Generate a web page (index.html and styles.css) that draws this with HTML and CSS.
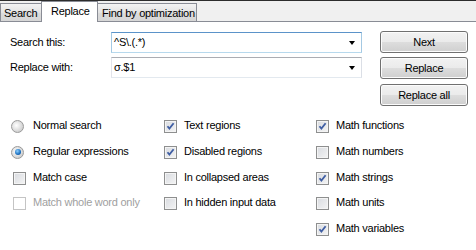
FILE: index.html
```html
<!DOCTYPE html>
<html>
<head>
  <meta charset="utf-8">
  <title>Find and replace</title>
  <link rel="stylesheet" href="styles.css">
</head>
<body>

  <ul class="tab-bar">
    <li class="tab tab-search">Search</li>
    <li class="tab tab-replace active">Replace</li>
    <li class="tab tab-find">Find by optimization</li>
  </ul>

  <section class="panel">
    <div class="top-row">
      <div class="fields">
        <div class="field-row">
          <label class="field-label">Search this:</label>
          <div class="combo focused">
            <span class="combo-text">^S\.(.*)</span>
            <span class="combo-arrow"></span>
          </div>
        </div>
        <div class="field-row">
          <label class="field-label">Replace with:</label>
          <div class="combo">
            <span class="combo-text">σ.$1</span>
            <span class="combo-arrow"></span>
          </div>
        </div>
      </div>
      <div class="buttons">
        <button class="btn">Next</button>
        <button class="btn">Replace</button>
        <button class="btn btn-last">Replace all</button>
      </div>
    </div>

    <div class="options">
      <!-- column 1 -->
      <div class="option col1 row1"><span class="radio"></span><span class="option-text">Normal search</span></div>
      <div class="option col1 row2"><span class="radio checked"></span><span class="option-text">Regular expressions</span></div>
      <div class="option col1 row3"><span class="check"></span><span class="option-text">Match case</span></div>
      <div class="option col1 row4 disabled"><span class="check"></span><span class="option-text">Match whole word only</span></div>

      <!-- column 2 -->
      <div class="option col2 row1"><span class="check checked"><svg viewBox="0 0 11 11" width="11" height="11"><path d="M2.5 5.2 L4.4 7.6 L8.6 2.2" fill="none" stroke="#3f5ea3" stroke-width="1.8"/></svg></span><span class="option-text">Text regions</span></div>
      <div class="option col2 row2"><span class="check checked"><svg viewBox="0 0 11 11" width="11" height="11"><path d="M2.5 5.2 L4.4 7.6 L8.6 2.2" fill="none" stroke="#3f5ea3" stroke-width="1.8"/></svg></span><span class="option-text">Disabled regions</span></div>
      <div class="option col2 row3"><span class="check"></span><span class="option-text">In collapsed areas</span></div>
      <div class="option col2 row4"><span class="check"></span><span class="option-text">In hidden input data</span></div>

      <!-- column 3 -->
      <div class="option col3 row1"><span class="check checked"><svg viewBox="0 0 11 11" width="11" height="11"><path d="M2.5 5.2 L4.4 7.6 L8.6 2.2" fill="none" stroke="#3f5ea3" stroke-width="1.8"/></svg></span><span class="option-text">Math functions</span></div>
      <div class="option col3 row2"><span class="check"></span><span class="option-text">Math numbers</span></div>
      <div class="option col3 row3"><span class="check checked"><svg viewBox="0 0 11 11" width="11" height="11"><path d="M2.5 5.2 L4.4 7.6 L8.6 2.2" fill="none" stroke="#3f5ea3" stroke-width="1.8"/></svg></span><span class="option-text">Math strings</span></div>
      <div class="option col3 row4"><span class="check"></span><span class="option-text">Math units</span></div>
      <div class="option col3 row5"><span class="check checked"><svg viewBox="0 0 11 11" width="11" height="11"><path d="M2.5 5.2 L4.4 7.6 L8.6 2.2" fill="none" stroke="#3f5ea3" stroke-width="1.8"/></svg></span><span class="option-text">Math variables</span></div>
    </div>
  </section>

</body>
</html>
```

FILE: styles.css
```css
html {
  font-family: "Liberation Sans", Arial, sans-serif;
  font-size: 11px;
  letter-spacing: -0.25px; /* closer to the narrow system dialog font */
}

* {
  box-sizing: border-box;
}

body {
  margin: 0;
  background: #ffffff;
  color: #000000;
}

/* tab strip across the top */
.tab-bar {
  list-style-type: none;
  margin: 0;
  padding: 0;
  height: 22px; /* 1px dark line + 20px strip + 1px bottom line */
  display: flex;
  align-items: flex-end;
  background: #f0f0f0;
  border-top: 1px solid #2c2c2c;
  border-bottom: 1px solid #898c95;
}

.tab {
  height: 18px;
  padding: 3px 0 0 3px;
  border: 1px solid #898c95;
  border-bottom: none;
  background: linear-gradient(#f3f3f3, #e3e3e3 50%, #dbdbdb 51%, #d6d6d6);
  line-height: 13px;
  white-space: nowrap;
  flex: none;
}

.tab-search {
  width: 42px;
}

.tab-find {
  width: 100px;
  padding-left: 4px;
}

.tab.active {
  height: 21px;
  width: 57px;
  margin: 0 -1px -1px -1px; /* overlap neighbours and cover the strip line */
  padding: 3px 0 0 9px;
  background: #ffffff;
  position: relative;
}

/* panel content */
.panel {
  padding: 9px 0 0 10px;
}

.top-row {
  display: flex;
}

.fields {
  padding-top: 1px;
  display: flex;
  flex-direction: column;
  gap: 4px;
}

.field-row {
  display: flex;
  align-items: center;
}

.field-label {
  width: 101px;
  line-height: 13px;
}

.combo {
  width: 251px;
  height: 21px;
  display: flex;
  align-items: center;
  padding: 0 6px 0 2px;
  border: 1px solid;
  border-color: #abadb3 #dbdfe6 #e3e9ef #e2e3ea;
  background: #ffffff;
}

.combo.focused {
  border-color: #5b93c9 #a4c9e3 #b7d9ed #a4c9e3;
}

.combo-text {
  flex: 1;
  line-height: 13px;
}

.combo-arrow {
  width: 0;
  height: 0;
  border-left: 3.5px solid transparent;
  border-right: 3.5px solid transparent;
  border-top: 4px solid #000000;
}

.buttons {
  margin-left: 18px;
  display: flex;
  flex-direction: column;
  gap: 4px;
}

.btn {
  width: 88px;
  height: 22px;
  padding: 0;
  font-family: inherit;
  font-size: 11px;
  letter-spacing: inherit;
  color: #000000;
  border: 1px solid #707070;
  border-radius: 3px;
  background: linear-gradient(#f2f2f2, #ebebeb 48%, #dddddd 52%, #cfcfcf);
  box-shadow: inset 0 0 0 1px #fcfcfc;
}

.btn-last {
  margin-top: 1px;
}

/* option grid */
.options {
  margin-top: 14px;
  display: grid;
  grid-template-columns: 151px 152px 150px;
  grid-template-rows: repeat(5, 25.75px);
  margin-left: 3px;
}

.col1 { grid-column: 1; }
.col2 { grid-column: 2; }
.col3 { grid-column: 3; }
.row1 { grid-row: 1; }
.row2 { grid-row: 2; }
.row3 { grid-row: 3; }
.row4 { grid-row: 4; }
.row5 { grid-row: 5; }

.option {
  display: flex;
  align-items: flex-start;
}

.option-text {
  margin-left: 7px;
  line-height: 13px;
  margin-top: -1px;
}

.disabled .option-text {
  color: #a0a0a0;
}

.check {
  width: 13px;
  height: 13px;
  flex: none;
  display: flex;
  align-items: center;
  justify-content: center;
  border: 1px solid #8e8f8f;
  background: linear-gradient(135deg, #d8dbe0, #f4f4f4);
  box-shadow: inset 0 0 0 1px #f4f4f4;
}

.disabled .check {
  border-color: #c4c4c4;
  background: #ffffff;
  box-shadow: none;
}

.radio {
  width: 13px;
  height: 13px;
  flex: none;
  margin-left: -2px;
  margin-right: 2px;
  border-radius: 50%;
  border: 1px solid #9a9a9a;
  background: radial-gradient(circle at 40% 40%, #ffffff, #d2d2d2 70%, #c4c4c4);
  position: relative;
}

.radio.checked::after {
  content: "";
  position: absolute;
  left: 2.5px;
  top: 2.5px;
  width: 6px;
  height: 6px;
  border-radius: 50%;
  background: radial-gradient(circle at 40% 35%, #8fd0ff, #1a6fc0 60%, #0d3f80);
}
```
